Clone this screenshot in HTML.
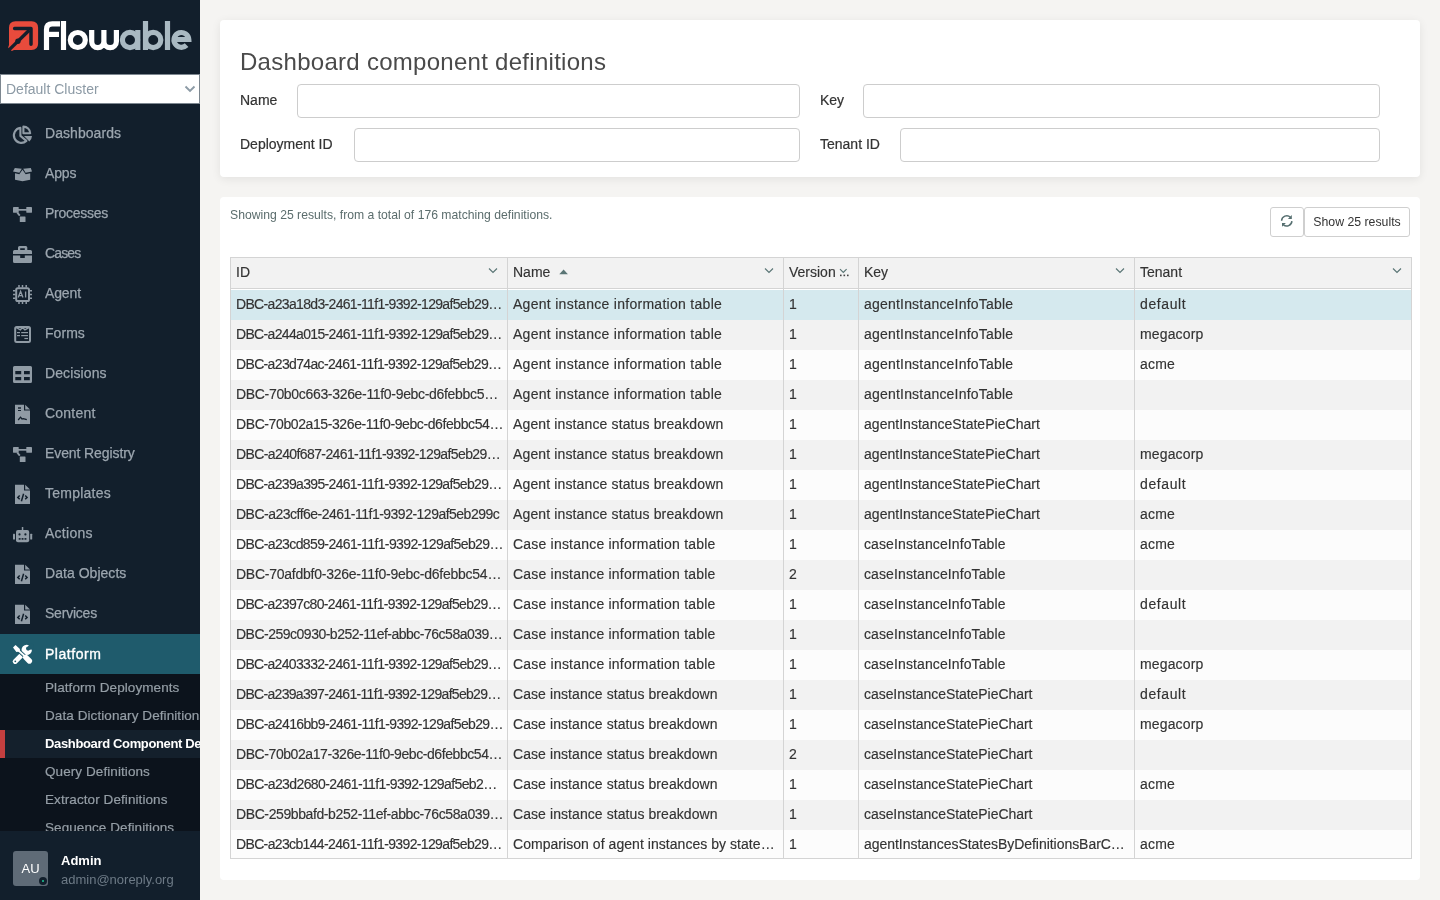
<!DOCTYPE html>
<html><head><meta charset="utf-8">
<style>
*{box-sizing:border-box;margin:0;padding:0}
html,body{will-change:transform;width:1440px;height:900px;overflow:hidden;font-family:"Liberation Sans",sans-serif;background:#f5f4f2}
#side{position:absolute;left:0;top:0;width:200px;height:900px;background:#121f2c;overflow:hidden}
#logo{position:absolute;left:0;top:0}
#cluster{position:absolute;left:0;top:74px;width:200px;height:30px;background:#fff;border:1px solid #7d8790;color:#8c9aa5;font-size:14px;line-height:28px;padding-left:5px}
#cluster svg{position:absolute;right:3px;top:10px}
.nav{position:absolute;left:0;width:200px;height:40px;color:#9ca6af;font-size:14px;line-height:40px;-webkit-text-stroke:0.25px #9ca6af}
.nav span{position:absolute;left:45px;top:0}
.nav svg.ic{position:absolute;left:8px}
.nav.act{background:#1f5b6c;color:#fff;-webkit-text-stroke:0.35px #fff}
#sub{position:absolute;left:0;top:674px;width:200px;height:157px;background:#0c131c}
.si{position:absolute;left:0;width:200px;height:28px;line-height:28px;font-size:13.5px;color:#959ea6;white-space:nowrap;overflow:hidden;-webkit-text-stroke:0.2px #959ea6;letter-spacing:0.08px}
.si span{position:absolute;left:45px;top:0}
.si.act{background:#14202c;color:#fff;font-weight:bold;font-size:13px;letter-spacing:-0.35px;-webkit-text-stroke:0}
.si.act:before{content:"";position:absolute;left:0;top:0;width:5px;height:28px;background:#c43f3f}
#user{position:absolute;left:0;top:831px;width:200px;height:69px;background:#121f2c}
#av{position:absolute;left:13px;top:20px;width:35px;height:35px;background:#5f6b77;border-radius:3px;color:#fff;font-size:13px;text-align:center;line-height:35px}
#dot{position:absolute;left:26px;top:26px;width:8px;height:8px;border-radius:50%;background:#121f2c}
#dot:after{content:"";position:absolute;left:3px;top:3px;width:2px;height:2px;background:#1ec997;border-radius:50%}
#uname{position:absolute;left:61px;top:22px;color:#fff;font-weight:bold;font-size:13px}
#umail{position:absolute;left:61px;top:41px;color:#6d7a86;font-size:13px}
.card{position:absolute;left:220px;width:1200px;background:#fff;border-radius:4px;box-shadow:0 2px 10px rgba(0,0,0,.08)}
#c1{top:20px;height:157px}
#c2{top:197px;height:683px;box-shadow:none}
h1{position:absolute;left:20px;top:28px;font-size:24px;font-weight:normal;color:#4a4a4a;letter-spacing:0.28px;white-space:nowrap}
.lbl{position:absolute;font-size:14px;color:#333;white-space:nowrap;-webkit-text-stroke:0.2px #333}
.inp{position:absolute;height:34px;border:1px solid #cdcdcd;border-radius:4px;background:#fff}

#info{position:absolute;left:10px;top:11px;font-size:12.2px;color:#5b6d6d;white-space:nowrap}
.btn{position:absolute;top:10px;height:30px;border:1px solid #cfcfcf;border-radius:3px;background:#fff}
#b1{left:1050px;width:34px}
#b2{left:1084px;width:106px;font-size:12.3px;color:#333;line-height:28px;text-align:center}
#tbl{position:absolute;left:10px;top:60px;width:1182px;height:602px;border:1px solid #d4d4d4;overflow:hidden;background:#fff}
.hdr{position:absolute;left:0;top:0;width:1180px;height:31px;background:#f2f2f2;border-bottom:1px solid #d4d4d4}
.hc{position:absolute;top:0;line-height:29px;font-size:14px;color:#333;white-space:nowrap;-webkit-text-stroke:0.15px #333}
.row{position:absolute;left:0;width:1180px;height:30px}
.row.sel{background:#d5e9ee}
.row.odd{background:#f2f2f2}
.row.even{background:#fcfcfc}
.c{position:absolute;top:0;line-height:29px;font-size:14px;color:#333;white-space:nowrap;-webkit-text-stroke:0.15px #333}
.idc{letter-spacing:-0.64px}
.hi{position:absolute}
.vl{position:absolute;top:0;width:1px;height:600px;background:#d4d4d4}
</style></head><body>
<div id="side">
  <svg id="logo" width="200" height="60" viewBox="0 0 200 60">
<path fill="#e84b3c" d="M15.5 21.2 H31.5 Q38.1 21.2 38.1 27.8 V43.6 Q38.1 50.1 31.5 50.1 H14 L11.8 50.9 L8.1 47.6 L9 45 V27.8 Q9 21.2 15.5 21.2 Z"/>
<path d="M9.6 49.4 L29.2 30.2" stroke="#121f2c" stroke-width="3.4"/>
<circle cx="17.9" cy="41.2" r="2.7" fill="#121f2c"/>
<path d="M14.6 28.5 H31 V44.2" fill="none" stroke="#121f2c" stroke-width="3.5" stroke-linecap="round" stroke-linejoin="round"/>
<g fill="none" stroke="#ffffff" stroke-width="5.2">
<path d="M46.5 50 V29.5 Q46.5 23.8 52.3 23.8 H60"/>
<path d="M46.5 34.4 H59"/>
<path d="M63.5 21 V50"/>
<circle cx="77.8" cy="40" r="7.5"/>
<path d="M91.7 30 V41.5 A6.1 6.1 0 0 0 103.9 41.5 V30 M103.9 41.5 A6.25 6.1 0 0 0 116.4 41.5 V30"/>
</g>
<g fill="none" stroke="#a9b9c2" stroke-width="5.2">
<circle cx="130" cy="40" r="7.6"/>
<path d="M137.8 30 V50"/>
<path d="M145.5 21 V50"/>
<circle cx="153.2" cy="40" r="7.6"/>
<path d="M167.5 21 V50"/>
<path d="M173.8 39.5 H188.8 A7.4 7.4 0 1 0 186.6 45.2"/>
</g>
</svg>
  <div id="cluster">Default Cluster<svg width="12" height="8" viewBox="0 0 12 8"><path d="M1.5 1.5 L6 6 L10.5 1.5" fill="none" stroke="#8d9ba6" stroke-width="1.9"/></svg></div>
  <!--NAV-->
  <div class="nav" style="top:113px"><svg class="ic" style="top:7px" width="30" height="30" viewBox="0 0 30 30"><g fill="none" stroke="#909ba5" stroke-width="2.1" stroke-linejoin="round">
<path d="M12.4 7.9 A7.5 7.5 0 1 0 18.4 20.9 L12.4 15.9 Z"/>
<path d="M15.4 6.6 V13.2 H22.2 A6.8 6.8 0 0 0 15.4 6.6 Z"/></g>
<path fill="#909ba5" d="M16 16 H24 A8.6 8.6 0 0 1 21.4 21.6 Z"/></svg><span style="letter-spacing:0.056px">Dashboards</span></div>
  <div class="nav" style="top:153px"><svg class="ic" style="top:7px" width="30" height="30" viewBox="0 0 30 30"><g fill="#909ba5">
<path d="M7 13.2 L11.3 14.2 L14.5 9.8 L17.7 14.2 L22.2 13.2 V19.7 L14.5 21.3 L7 19.7 Z"/>
<path d="M5 11.6 L6.8 8 L13.8 8.7 L11.4 12.8 Z"/>
<path d="M15.2 8.7 L22.8 8 L24 11.6 L17.6 12.8 Z"/></g></svg><span style="letter-spacing:-0.167px">Apps</span></div>
  <div class="nav" style="top:193px"><svg class="ic" style="top:7px" width="30" height="30" viewBox="0 0 30 30"><g fill="#909ba5">
<rect x="5" y="7" width="5.7" height="5.7" rx=".4"/>
<rect x="18.3" y="7" width="5.7" height="5.7" rx=".4"/>
<rect x="11.8" y="16.6" width="5.7" height="5.5" rx=".4"/>
<rect x="10" y="9" width="9" height="1.7"/></g>
<path d="M9.2 12.5 L11.8 15.6" stroke="#909ba5" stroke-width="1.9"/></svg><span style="letter-spacing:-0.250px">Processes</span></div>
  <div class="nav" style="top:233px"><svg class="ic" style="top:7px" width="30" height="30" viewBox="0 0 30 30"><path fill="#909ba5" fill-rule="evenodd" d="M10 10 V7.5 Q10 6 11.5 6 H17.8 Q19.3 6 19.3 7.5 V10 H22.5 Q24 10 24 11.5 V14 H5 V11.5 Q5 10 6.5 10 Z M12.2 8.2 V10 H16.8 V8.2 Z"/>
<path fill="#909ba5" d="M5 15.6 H12.2 V18 H16.8 V15.6 H24 V21.5 Q24 23 22.5 23 H6.5 Q5 23 5 21.5 Z"/></svg><span style="letter-spacing:-0.875px">Cases</span></div>
  <div class="nav" style="top:273px"><svg class="ic" style="top:7px" width="30" height="30" viewBox="0 0 30 30"><rect x="8.2" y="8.2" width="12.8" height="12.8" rx="1.6" fill="none" stroke="#909ba5" stroke-width="2"/>
<g stroke="#909ba5" stroke-width="1.5">
<path d="M11 5 V7.5 M14.5 5 V7.5 M18.2 5 V7.5 M11 21.8 V24 M14.5 21.8 V24 M18.2 21.8 V24 M5 10.8 H7.5 M5 14.5 H7.5 M5 18.2 H7.5 M21.8 10.8 H24 M21.8 14.5 H24 M21.8 18.2 H24"/></g>
<path d="M10.2 17.5 L12.6 11.3 L15 17.5 M11.1 15.6 H14.1 M17.6 11.6 V17.5" fill="none" stroke="#909ba5" stroke-width="1.3"/></svg><span style="letter-spacing:-0.125px">Agent</span></div>
  <div class="nav" style="top:313px"><svg class="ic" style="top:7px" width="30" height="30" viewBox="0 0 30 30"><rect x="7.2" y="7" width="14.8" height="15" rx="1.5" fill="none" stroke="#909ba5" stroke-width="2"/>
<path d="M8 7.3 L12.3 9.8 L14.5 7.5 L16.9 9.8 L21.2 7.3" fill="none" stroke="#909ba5" stroke-width="1.4"/>
<g fill="#909ba5"><rect x="9" y="12" width="3" height="1.2"/><rect x="13.2" y="12" width="6.8" height="1.2"/>
<rect x="9" y="15" width="3" height="1.2"/><rect x="13.2" y="15" width="6.8" height="1.2"/>
<rect x="16.4" y="17.9" width="3.6" height="1.2"/></g></svg><span style="letter-spacing:0.050px">Forms</span></div>
  <div class="nav" style="top:353px"><svg class="ic" style="top:7px" width="30" height="30" viewBox="0 0 30 30"><path fill="#909ba5" fill-rule="evenodd" d="M6.5 6 H22.5 Q24 6 24 7.5 V21.5 Q24 23 22.5 23 H6.5 Q5 23 5 21.5 V7.5 Q5 6 6.5 6 Z M7.3 11 V14.2 H13.2 V11 Z M16 11 V14.2 H21.8 V11 Z M7.3 17 V20.3 H13.2 V17 Z M16 17 V20.3 H21.8 V17 Z"/></svg><span style="letter-spacing:0.112px">Decisions</span></div>
  <div class="nav" style="top:393px"><svg class="ic" style="top:7px" width="30" height="30" viewBox="0 0 30 30"><path fill="#909ba5" d="M7 4.8 H16 V10.5 H22 V24 H7 Z"/><path fill="#909ba5" d="M17.2 4.8 L22 9.6 H17.2 Z"/><g fill="#121f2c"><rect x="10" y="7.3" width="3" height="1.4"/><rect x="10" y="10" width="3" height="1"/></g>
<path d="M10.2 20 L12.5 17.2 L14 19 L15.3 18.6 L18.8 19.6" fill="none" stroke="#121f2c" stroke-width="1.3"/></svg><span style="letter-spacing:0.217px">Content</span></div>
  <div class="nav" style="top:433px"><svg class="ic" style="top:7px" width="30" height="30" viewBox="0 0 30 30"><g fill="#909ba5">
<rect x="5" y="7" width="5.7" height="5.7" rx=".4"/>
<rect x="18.3" y="7" width="5.7" height="5.7" rx=".4"/>
<rect x="11.8" y="16.6" width="5.7" height="5.5" rx=".4"/>
<rect x="10" y="9" width="9" height="1.7"/></g>
<path d="M9.2 12.5 L11.8 15.6" stroke="#909ba5" stroke-width="1.9"/></svg><span style="letter-spacing:-0.100px">Event Registry</span></div>
  <div class="nav" style="top:473px"><svg class="ic" style="top:7px" width="30" height="30" viewBox="0 0 30 30"><path fill="#909ba5" d="M7 4.8 H16 V10.5 H22 V24 H7 Z"/><path fill="#909ba5" d="M17.2 4.8 L22 9.6 H17.2 Z"/><path d="M11.7 15.5 L9.8 17.4 L11.7 19.3 M17.2 15.5 L19.1 17.4 L17.2 19.3 M15.6 13.8 L13.4 21.2" fill="none" stroke="#121f2c" stroke-width="1.5"/></svg><span style="letter-spacing:0.237px">Templates</span></div>
  <div class="nav" style="top:513px"><svg class="ic" style="top:7px" width="30" height="30" viewBox="0 0 30 30"><g fill="#909ba5"><rect x="8" y="10" width="13.2" height="12.2" rx="2"/>
<rect x="13.8" y="7" width="1.5" height="3.5"/>
<rect x="5" y="13.8" width="2" height="5.7" rx=".5"/><rect x="22.2" y="13.8" width="2" height="5.7" rx=".5"/></g>
<g fill="#121f2c"><circle cx="11.5" cy="14.4" r="1.1"/><circle cx="17.4" cy="14.4" r="1.1"/>
<rect x="10.7" y="18.1" width="1.9" height="1.6"/><rect x="13.6" y="18.1" width="1.9" height="1.6"/><rect x="16.5" y="18.1" width="1.9" height="1.6"/></g></svg><span style="letter-spacing:0.267px">Actions</span></div>
  <div class="nav" style="top:553px"><svg class="ic" style="top:7px" width="30" height="30" viewBox="0 0 30 30"><path fill="#909ba5" d="M7 4.8 H16 V10.5 H22 V24 H7 Z"/><path fill="#909ba5" d="M17.2 4.8 L22 9.6 H17.2 Z"/><path d="M11.7 15.5 L9.8 17.4 L11.7 19.3 M17.2 15.5 L19.1 17.4 L17.2 19.3 M15.6 13.8 L13.4 21.2" fill="none" stroke="#121f2c" stroke-width="1.5"/></svg><span style="letter-spacing:0.036px">Data Objects</span></div>
  <div class="nav" style="top:593px"><svg class="ic" style="top:7px" width="30" height="30" viewBox="0 0 30 30"><path fill="#909ba5" d="M7 4.8 H16 V10.5 H22 V24 H7 Z"/><path fill="#909ba5" d="M17.2 4.8 L22 9.6 H17.2 Z"/><path d="M11.7 15.5 L9.8 17.4 L11.7 19.3 M17.2 15.5 L19.1 17.4 L17.2 19.3 M15.6 13.8 L13.4 21.2" fill="none" stroke="#121f2c" stroke-width="1.5"/></svg><span style="letter-spacing:-0.214px">Services</span></div>
  <div class="nav act" style="top:634px"><svg class="ic" style="top:5px" width="30" height="30" viewBox="0 0 30 30"><circle cx="18.7" cy="10.9" r="5.2" fill="#fff"/>
<path d="M7.2 22.4 L15.2 14.4" stroke="#fff" stroke-width="5" stroke-linecap="round"/>
<g fill="#1f5b6c"><circle cx="20.1" cy="9.6" r="2.1"/><path d="M19.4 8.6 L22 4.2 L26 5.5 L25.4 10.4 L21.2 10.8 Z"/><circle cx="7.3" cy="22.3" r=".9"/></g>
<path d="M10.6 11.6 L17.4 17.8" stroke="#1f5b6c" stroke-width="3.8"/>
<path d="M10.6 11.6 L17.4 17.8" stroke="#fff" stroke-width="1.9"/>
<path fill="#fff" d="M5 8.5 L7.5 6 L11.9 10 L11.9 12.6 L8.4 13 Z"/>
<path d="M17.8 18.4 L21.4 22" stroke="#fff" stroke-width="5.4" stroke-linecap="round"/></svg><span style="letter-spacing:0.529px">Platform</span></div>
  <!--/NAV-->
  <div id="sub">
    <div class="si" style="top:0"><span>Platform Deployments</span></div>
    <div class="si" style="top:28px"><span>Data Dictionary Definitions</span></div>
    <div class="si act" style="top:56px"><span>Dashboard Component Definitions</span></div>
    <div class="si" style="top:84px"><span>Query Definitions</span></div>
    <div class="si" style="top:112px"><span>Extractor Definitions</span></div>
    <div class="si" style="top:140px"><span>Sequence Definitions</span></div>
  </div>
  <div id="user">
    <div id="av">AU<div id="dot"></div></div>
    <div id="uname">Admin</div>
    <div id="umail">admin@noreply.org</div>
  </div>
</div>
<div class="card" id="c1">
  <h1>Dashboard component definitions</h1>
  <div class="lbl" style="left:20px;top:72px">Name</div>
  <div class="inp" style="left:77px;top:64px;width:503px"></div>
  <div class="lbl" style="left:600px;top:72px">Key</div>
  <div class="inp" style="left:643px;top:64px;width:517px"></div>
  <div class="lbl" style="left:20px;top:116px">Deployment ID</div>
  <div class="inp" style="left:134px;top:108px;width:446px"></div>
  <div class="lbl" style="left:600px;top:116px">Tenant ID</div>
  <div class="inp" style="left:680px;top:108px;width:480px"></div>
</div>
<div class="card" id="c2">
  <div id="info">Showing 25 results, from a total of 176 matching definitions.</div>
  <div class="btn" id="b1"><svg style="position:absolute;left:5px;top:3px" width="22" height="22" viewBox="0 0 22 22"><g fill="none" stroke="#566f70" stroke-width="1.5"><path d="M5.6 9.8 A5.2 5.2 0 0 1 14.4 6.2"/><path d="M15.9 10.1 A5.2 5.2 0 0 1 7.3 13.7"/></g><g fill="#566f70"><path d="M11.9 7.9 H15.8 V4 Z"/><path d="M6 11.9 H9.9 L6 15.8 Z"/></g></svg></div>
  <div class="btn" id="b2">Show 25 results</div>
<!--TBL-->
<div id="tbl">
<div class="hdr">
<div class="hc" style="left:5px">ID</div>
<div class="hc" style="left:282px">Name</div>
<div class="hc" style="left:558px">Version</div>
<div class="hc" style="left:633px">Key</div>
<div class="hc" style="left:909px">Tenant</div>
</div>
<div class="row sel" style="top:32px">
<div class="c" style="left:5px;letter-spacing:-0.666px">DBC-a23a18d3-2461-11f1-9392-129af5eb29…</div>
<div class="c" style="left:282px;letter-spacing:0.284px">Agent instance information table</div>
<div class="c" style="left:558px">1</div>
<div class="c" style="left:633px;letter-spacing:0.202px">agentInstanceInfoTable</div>
<div class="c" style="left:909px;letter-spacing:0.617px">default</div>
</div>
<div class="row odd" style="top:62px">
<div class="c" style="left:5px;letter-spacing:-0.666px">DBC-a244a015-2461-11f1-9392-129af5eb29…</div>
<div class="c" style="left:282px;letter-spacing:0.284px">Agent instance information table</div>
<div class="c" style="left:558px">1</div>
<div class="c" style="left:633px;letter-spacing:0.202px">agentInstanceInfoTable</div>
<div class="c" style="left:909px;letter-spacing:0.143px">megacorp</div>
</div>
<div class="row even" style="top:92px">
<div class="c" style="left:5px;letter-spacing:-0.651px">DBC-a23d74ac-2461-11f1-9392-129af5eb29…</div>
<div class="c" style="left:282px;letter-spacing:0.284px">Agent instance information table</div>
<div class="c" style="left:558px">1</div>
<div class="c" style="left:633px;letter-spacing:0.202px">agentInstanceInfoTable</div>
<div class="c" style="left:909px;letter-spacing:0.200px">acme</div>
</div>
<div class="row odd" style="top:122px">
<div class="c" style="left:5px;letter-spacing:-0.321px">DBC-70b0c663-326e-11f0-9ebc-d6febbc5…</div>
<div class="c" style="left:282px;letter-spacing:0.284px">Agent instance information table</div>
<div class="c" style="left:558px">1</div>
<div class="c" style="left:633px;letter-spacing:0.202px">agentInstanceInfoTable</div>
<div class="c" style="left:909px"></div>
</div>
<div class="row even" style="top:152px">
<div class="c" style="left:5px;letter-spacing:-0.399px">DBC-70b02a15-326e-11f0-9ebc-d6febbc54…</div>
<div class="c" style="left:282px;letter-spacing:0.133px">Agent instance status breakdown</div>
<div class="c" style="left:558px">1</div>
<div class="c" style="left:633px;letter-spacing:0.030px">agentInstanceStatePieChart</div>
<div class="c" style="left:909px"></div>
</div>
<div class="row odd" style="top:182px">
<div class="c" style="left:5px;letter-spacing:-0.606px">DBC-a240f687-2461-11f1-9392-129af5eb29…</div>
<div class="c" style="left:282px;letter-spacing:0.133px">Agent instance status breakdown</div>
<div class="c" style="left:558px">1</div>
<div class="c" style="left:633px;letter-spacing:0.030px">agentInstanceStatePieChart</div>
<div class="c" style="left:909px;letter-spacing:0.143px">megacorp</div>
</div>
<div class="row even" style="top:212px">
<div class="c" style="left:5px;letter-spacing:-0.666px">DBC-a239a395-2461-11f1-9392-129af5eb29…</div>
<div class="c" style="left:282px;letter-spacing:0.133px">Agent instance status breakdown</div>
<div class="c" style="left:558px">1</div>
<div class="c" style="left:633px;letter-spacing:0.030px">agentInstanceStatePieChart</div>
<div class="c" style="left:909px;letter-spacing:0.617px">default</div>
</div>
<div class="row odd" style="top:242px">
<div class="c" style="left:5px;letter-spacing:-0.509px">DBC-a23cff6e-2461-11f1-9392-129af5eb299c</div>
<div class="c" style="left:282px;letter-spacing:0.133px">Agent instance status breakdown</div>
<div class="c" style="left:558px">1</div>
<div class="c" style="left:633px;letter-spacing:0.030px">agentInstanceStatePieChart</div>
<div class="c" style="left:909px;letter-spacing:0.200px">acme</div>
</div>
<div class="row even" style="top:272px">
<div class="c" style="left:5px;letter-spacing:-0.616px">DBC-a23cd859-2461-11f1-9392-129af5eb29…</div>
<div class="c" style="left:282px;letter-spacing:0.207px">Case instance information table</div>
<div class="c" style="left:558px">1</div>
<div class="c" style="left:633px;letter-spacing:0.110px">caseInstanceInfoTable</div>
<div class="c" style="left:909px;letter-spacing:0.200px">acme</div>
</div>
<div class="row odd" style="top:302px">
<div class="c" style="left:5px;letter-spacing:-0.245px">DBC-70afdbf0-326e-11f0-9ebc-d6febbc54…</div>
<div class="c" style="left:282px;letter-spacing:0.207px">Case instance information table</div>
<div class="c" style="left:558px">2</div>
<div class="c" style="left:633px;letter-spacing:0.110px">caseInstanceInfoTable</div>
<div class="c" style="left:909px"></div>
</div>
<div class="row even" style="top:332px">
<div class="c" style="left:5px;letter-spacing:-0.664px">DBC-a2397c80-2461-11f1-9392-129af5eb29…</div>
<div class="c" style="left:282px;letter-spacing:0.207px">Case instance information table</div>
<div class="c" style="left:558px">1</div>
<div class="c" style="left:633px;letter-spacing:0.110px">caseInstanceInfoTable</div>
<div class="c" style="left:909px;letter-spacing:0.617px">default</div>
</div>
<div class="row odd" style="top:362px">
<div class="c" style="left:5px;letter-spacing:-0.502px">DBC-259c0930-b252-11ef-abbc-76c58a039…</div>
<div class="c" style="left:282px;letter-spacing:0.207px">Case instance information table</div>
<div class="c" style="left:558px">1</div>
<div class="c" style="left:633px;letter-spacing:0.110px">caseInstanceInfoTable</div>
<div class="c" style="left:909px"></div>
</div>
<div class="row even" style="top:392px">
<div class="c" style="left:5px;letter-spacing:-0.679px">DBC-a2403332-2461-11f1-9392-129af5eb29…</div>
<div class="c" style="left:282px;letter-spacing:0.207px">Case instance information table</div>
<div class="c" style="left:558px">1</div>
<div class="c" style="left:633px;letter-spacing:0.110px">caseInstanceInfoTable</div>
<div class="c" style="left:909px;letter-spacing:0.143px">megacorp</div>
</div>
<div class="row odd" style="top:422px">
<div class="c" style="left:5px;letter-spacing:-0.693px">DBC-a239a397-2461-11f1-9392-129af5eb29…</div>
<div class="c" style="left:282px;letter-spacing:0.076px">Case instance status breakdown</div>
<div class="c" style="left:558px">1</div>
<div class="c" style="left:633px;letter-spacing:-0.050px">caseInstanceStatePieChart</div>
<div class="c" style="left:909px;letter-spacing:0.617px">default</div>
</div>
<div class="row even" style="top:452px">
<div class="c" style="left:5px;letter-spacing:-0.635px">DBC-a2416bb9-2461-11f1-9392-129af5eb29…</div>
<div class="c" style="left:282px;letter-spacing:0.076px">Case instance status breakdown</div>
<div class="c" style="left:558px">1</div>
<div class="c" style="left:633px;letter-spacing:-0.050px">caseInstanceStatePieChart</div>
<div class="c" style="left:909px;letter-spacing:0.143px">megacorp</div>
</div>
<div class="row odd" style="top:482px">
<div class="c" style="left:5px;letter-spacing:-0.424px">DBC-70b02a17-326e-11f0-9ebc-d6febbc54…</div>
<div class="c" style="left:282px;letter-spacing:0.076px">Case instance status breakdown</div>
<div class="c" style="left:558px">2</div>
<div class="c" style="left:633px;letter-spacing:-0.050px">caseInstanceStatePieChart</div>
<div class="c" style="left:909px"></div>
</div>
<div class="row even" style="top:512px">
<div class="c" style="left:5px;letter-spacing:-0.613px">DBC-a23d2680-2461-11f1-9392-129af5eb2…</div>
<div class="c" style="left:282px;letter-spacing:0.076px">Case instance status breakdown</div>
<div class="c" style="left:558px">1</div>
<div class="c" style="left:633px;letter-spacing:-0.050px">caseInstanceStatePieChart</div>
<div class="c" style="left:909px;letter-spacing:0.200px">acme</div>
</div>
<div class="row odd" style="top:542px">
<div class="c" style="left:5px;letter-spacing:-0.397px">DBC-259bbafd-b252-11ef-abbc-76c58a039…</div>
<div class="c" style="left:282px;letter-spacing:0.076px">Case instance status breakdown</div>
<div class="c" style="left:558px">1</div>
<div class="c" style="left:633px;letter-spacing:-0.050px">caseInstanceStatePieChart</div>
<div class="c" style="left:909px"></div>
</div>
<div class="row even" style="top:572px">
<div class="c" style="left:5px;letter-spacing:-0.645px">DBC-a23cb144-2461-11f1-9392-129af5eb29…</div>
<div class="c" style="left:282px;letter-spacing:0.045px">Comparison of agent instances by state…</div>
<div class="c" style="left:558px">1</div>
<div class="c" style="left:633px;letter-spacing:-0.038px">agentInstancesStatesByDefinitionsBarC…</div>
<div class="c" style="left:909px;letter-spacing:0.200px">acme</div>
</div>
<div class="vl" style="left:276px"></div>
<div class="vl" style="left:552px"></div>
<div class="vl" style="left:627px"></div>
<div class="vl" style="left:903px"></div>
<svg class="hi" style="left:256.5px;top:9px" width="10" height="8" viewBox="0 0 10 8"><path d="M1 1.5 L5 5.5 L9 1.5" fill="none" stroke="#5a7575" stroke-width="1.15"/></svg><svg class="hi" style="left:532.5px;top:9px" width="10" height="8" viewBox="0 0 10 8"><path d="M1 1.5 L5 5.5 L9 1.5" fill="none" stroke="#5a7575" stroke-width="1.15"/></svg><svg class="hi" style="left:883.5px;top:9px" width="10" height="8" viewBox="0 0 10 8"><path d="M1 1.5 L5 5.5 L9 1.5" fill="none" stroke="#5a7575" stroke-width="1.15"/></svg><svg class="hi" style="left:1160.5px;top:9px" width="10" height="8" viewBox="0 0 10 8"><path d="M1 1.5 L5 5.5 L9 1.5" fill="none" stroke="#5a7575" stroke-width="1.15"/></svg><svg class="hi" style="left:327.5px;top:11px" width="10" height="6" viewBox="0 0 10 6"><path d="M0.3 5.2 L4.6 0.6 L8.9 5.2 Z" fill="#5a7575"/></svg><svg class="hi" style="left:608px;top:10px" width="12" height="10" viewBox="0 0 12 10"><path d="M1 1.2 L4.3 4.5 L7.6 1.2" fill="none" stroke="#5a7575" stroke-width="1.2"/><g fill="#444"><rect x="1" y="6.6" width="1.6" height="1.6"/><rect x="4.5" y="6.6" width="1.6" height="1.6"/><rect x="8" y="6.6" width="1.6" height="1.6"/></g></svg>
</div>
<!--/TBL-->
</div>
</body></html>
